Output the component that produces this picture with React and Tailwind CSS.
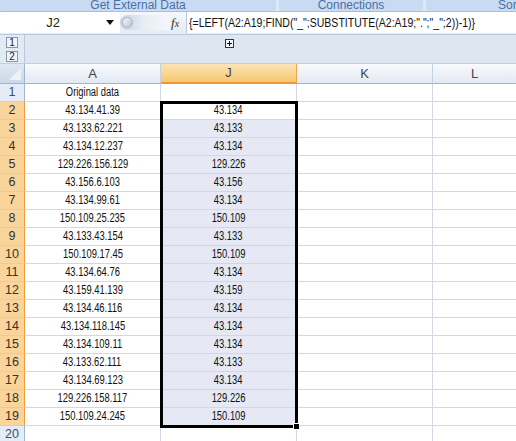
import React from 'react';

const rows = [
    ['Original data', ''],
    ['43.134.41.39', '43.134'],
    ['43.133.62.221', '43.133'],
    ['43.134.12.237', '43.134'],
    ['129.226.156.129', '129.226'],
    ['43.156.6.103', '43.156'],
    ['43.134.99.61', '43.134'],
    ['150.109.25.235', '150.109'],
    ['43.133.43.154', '43.133'],
    ['150.109.17.45', '150.109'],
    ['43.134.64.76', '43.134'],
    ['43.159.41.139', '43.159'],
    ['43.134.46.116', '43.134'],
    ['43.134.118.145', '43.134'],
    ['43.134.109.11', '43.134'],
    ['43.133.62.111', '43.133'],
    ['43.134.69.123', '43.134'],
    ['129.226.158.117', '129.226'],
    ['150.109.24.245', '150.109'],
    ['', ''],
];

const RibbonGroup = ({ label, className }) => (
    <div className={`h-full flex items-end justify-center overflow-hidden rounded-b-[3px] bg-[#c9dbf2] ${className}`}>
        <span className="text-[12px] leading-[14px] text-[#4d6fa6] whitespace-nowrap -mb-[1px]">{label}</span>
    </div>
);

const ColHeader = ({ label, selected, className = '' }) => (
    <div
        className={`h-full flex items-center justify-center border-r text-[13px] ${
            selected
                ? 'bg-gradient-to-b from-[#fbe3b4] to-[#f7c86e] border-[#f2a24a] border-b-2 border-b-[#f29536] text-[#444]'
                : 'bg-gradient-to-b from-[#f8fafd] to-[#e3e9f2] border-[#c5d2e3] border-b border-b-[#9eb6ce] text-[#444]'
        } ${className}`}
    >
        {label}
    </div>
);

const Cell = ({ children, className = '' }) => (
    <div className={`w-[136px] h-full flex items-center justify-center border-r border-b border-[#d0d7e5] ${className}`}>
        <span className="inline-block text-[12.5px] text-[#111] whitespace-nowrap scale-x-[0.75]">{children}</span>
    </div>
);

export default function App() {
    return (
        <div className="w-[516px] h-[441px] overflow-hidden bg-white font-['Liberation_Sans',sans-serif] select-none">
            {/* ribbon group labels */}
            <div className="h-[12px] flex gap-[3px] bg-[#dde8f6] border-b border-[#a7bfe0]">
                <RibbonGroup label="Get External Data" className="w-[276px]" />
                <RibbonGroup label="Connections" className="w-[144px]" />
                <div className="flex-1 h-full overflow-hidden rounded-bl-[3px] bg-[#c9dbf2] flex items-end pl-[72px]">
                    <span className="text-[12px] leading-[14px] text-[#4d6fa6] whitespace-nowrap -mb-[1px]">Sort &amp; Filter</span>
                </div>
            </div>

            {/* formula bar */}
            <div className="h-[23px] flex items-start bg-[#e3ebf6] border-b border-[#b8c9df]">
                <div className="w-[120px] h-[21px] bg-white flex items-center">
                    <span className="flex-1 text-center text-[13px] text-[#222]">J2</span>
                    <svg width="8" height="5" viewBox="0 0 8 5" className="mr-[6px]">
                        <path d="M0 0h8L4 5z" fill="#111" />
                    </svg>
                </div>
                <div className="w-[52px] h-[21px] bg-gradient-to-b from-[#f4f7fb] to-[#e6ecf4] flex items-center">
                    <div className="w-[50px] h-[15px] rounded-l-full bg-gradient-to-r from-[#c7d1de] via-[#e9eef5] to-[#f5f7fa] flex items-center pl-[2px]">
                        <div className="w-[11px] h-[11px] rounded-full bg-gradient-to-br from-[#f6f8fb] to-[#b9c4d2] border border-[#a4b1c2]" />
                    </div>
                </div>
                <div className="w-[14px] h-[21px] bg-gradient-to-b from-[#f4f7fb] to-[#e6ecf4] flex items-center">
                    <span className="font-['Liberation_Serif',serif] italic text-[13px] text-[#333] -ml-[1px]">f<span className="text-[10px]">x</span></span>
                </div>
                <div className="flex-1 h-[21px] bg-white border-l border-[#b8c9df] flex items-center pl-[2px] overflow-hidden">
                    <span className="inline-block origin-left scale-x-[0.81] text-[13px] text-[#111] whitespace-nowrap">
                        {'{=LEFT(A2:A19;FIND("_";SUBSTITUTE(A2:A19;".";"_";2))-1)}'}
                    </span>
                </div>
            </div>

            {/* outline area */}
            <div className="h-[29px] flex bg-[#dde6f1] border-b border-[#c2cfe0]">
                <div className="w-[25px] h-full border-r border-[#b9c8dc] bg-[#e2eaf4] flex flex-col items-center pt-[2px] gap-[3px]">
                    <div className="w-[12px] h-[11px] border border-[#8798b0] bg-[#f1f5fa] flex items-center justify-center text-[10px] leading-none text-[#222]">1</div>
                    <div className="w-[12px] h-[11px] border border-[#8798b0] bg-[#f1f5fa] flex items-center justify-center text-[10px] leading-none text-[#222]">2</div>
                </div>
                <div className="flex-1 relative">
                    <div className="absolute left-[200px] top-[4px] w-[9px] h-[9px] border border-[#333] bg-[#f4f6f9] flex items-center justify-center">
                        <svg width="5" height="5" viewBox="0 0 5 5">
                            <path d="M2 0h1v2h2v1H3v2H2V3H0V2h2z" fill="#111" />
                        </svg>
                    </div>
                </div>
            </div>

            {/* grid */}
            <div className="relative">
                <div className="h-[20px] flex">
                    <div className="w-[25px] h-full bg-gradient-to-b from-[#dfe8f4] to-[#cbd8ea] border-r border-b border-[#9eb6ce] flex items-end justify-end p-[3px]">
                        <svg width="12" height="12" viewBox="0 0 12 12">
                            <path d="M12 0v12H0z" fill="#eef3f9" />
                        </svg>
                    </div>
                    <ColHeader label="A" className="w-[136px]" />
                    <ColHeader label="J" selected className="w-[136px]" />
                    <ColHeader label="K" className="w-[136px]" />
                    <ColHeader label="L" className="flex-1 border-r-0" />
                </div>

                {rows.map(([a, j], i) => {
                    const n = i + 1;
                    const sel = n >= 2 && n <= 19;
                    return (
                        <div key={n} className="h-[18px] flex">
                            <div
                                className={`w-[25px] h-full flex items-center justify-center border-r border-b text-[12.5px] ${
                                    sel
                                        ? 'bg-[#f9d59b] border-r-[#f29b3c] border-b-[#f5c98a] text-[#333]'
                                        : 'bg-[#e4ecf7] border-r-[#9eb6ce] border-b-[#c5d2e3] text-[#3b4f6b]'
                                }`}
                            >
                                {n}
                            </div>
                            <Cell>{a}</Cell>
                            <Cell className={sel && n !== 2 ? 'bg-[#e6e9f4]' : 'bg-white'}>{j}</Cell>
                            <div className="w-[136px] h-full border-r border-b border-[#d0d7e5]" />
                            <div className="flex-1 h-full border-b border-[#d0d7e5]" />
                        </div>
                    );
                })}

                {/* selection outline */}
                <div className="absolute left-[160px] top-[37px] w-[138px] h-[327px] border-[3px] border-black pointer-events-none">
                    <div className="absolute -right-[5px] -bottom-[5px] w-[7px] h-[7px] bg-black border border-white" />
                </div>
            </div>
        </div>
    );
}
